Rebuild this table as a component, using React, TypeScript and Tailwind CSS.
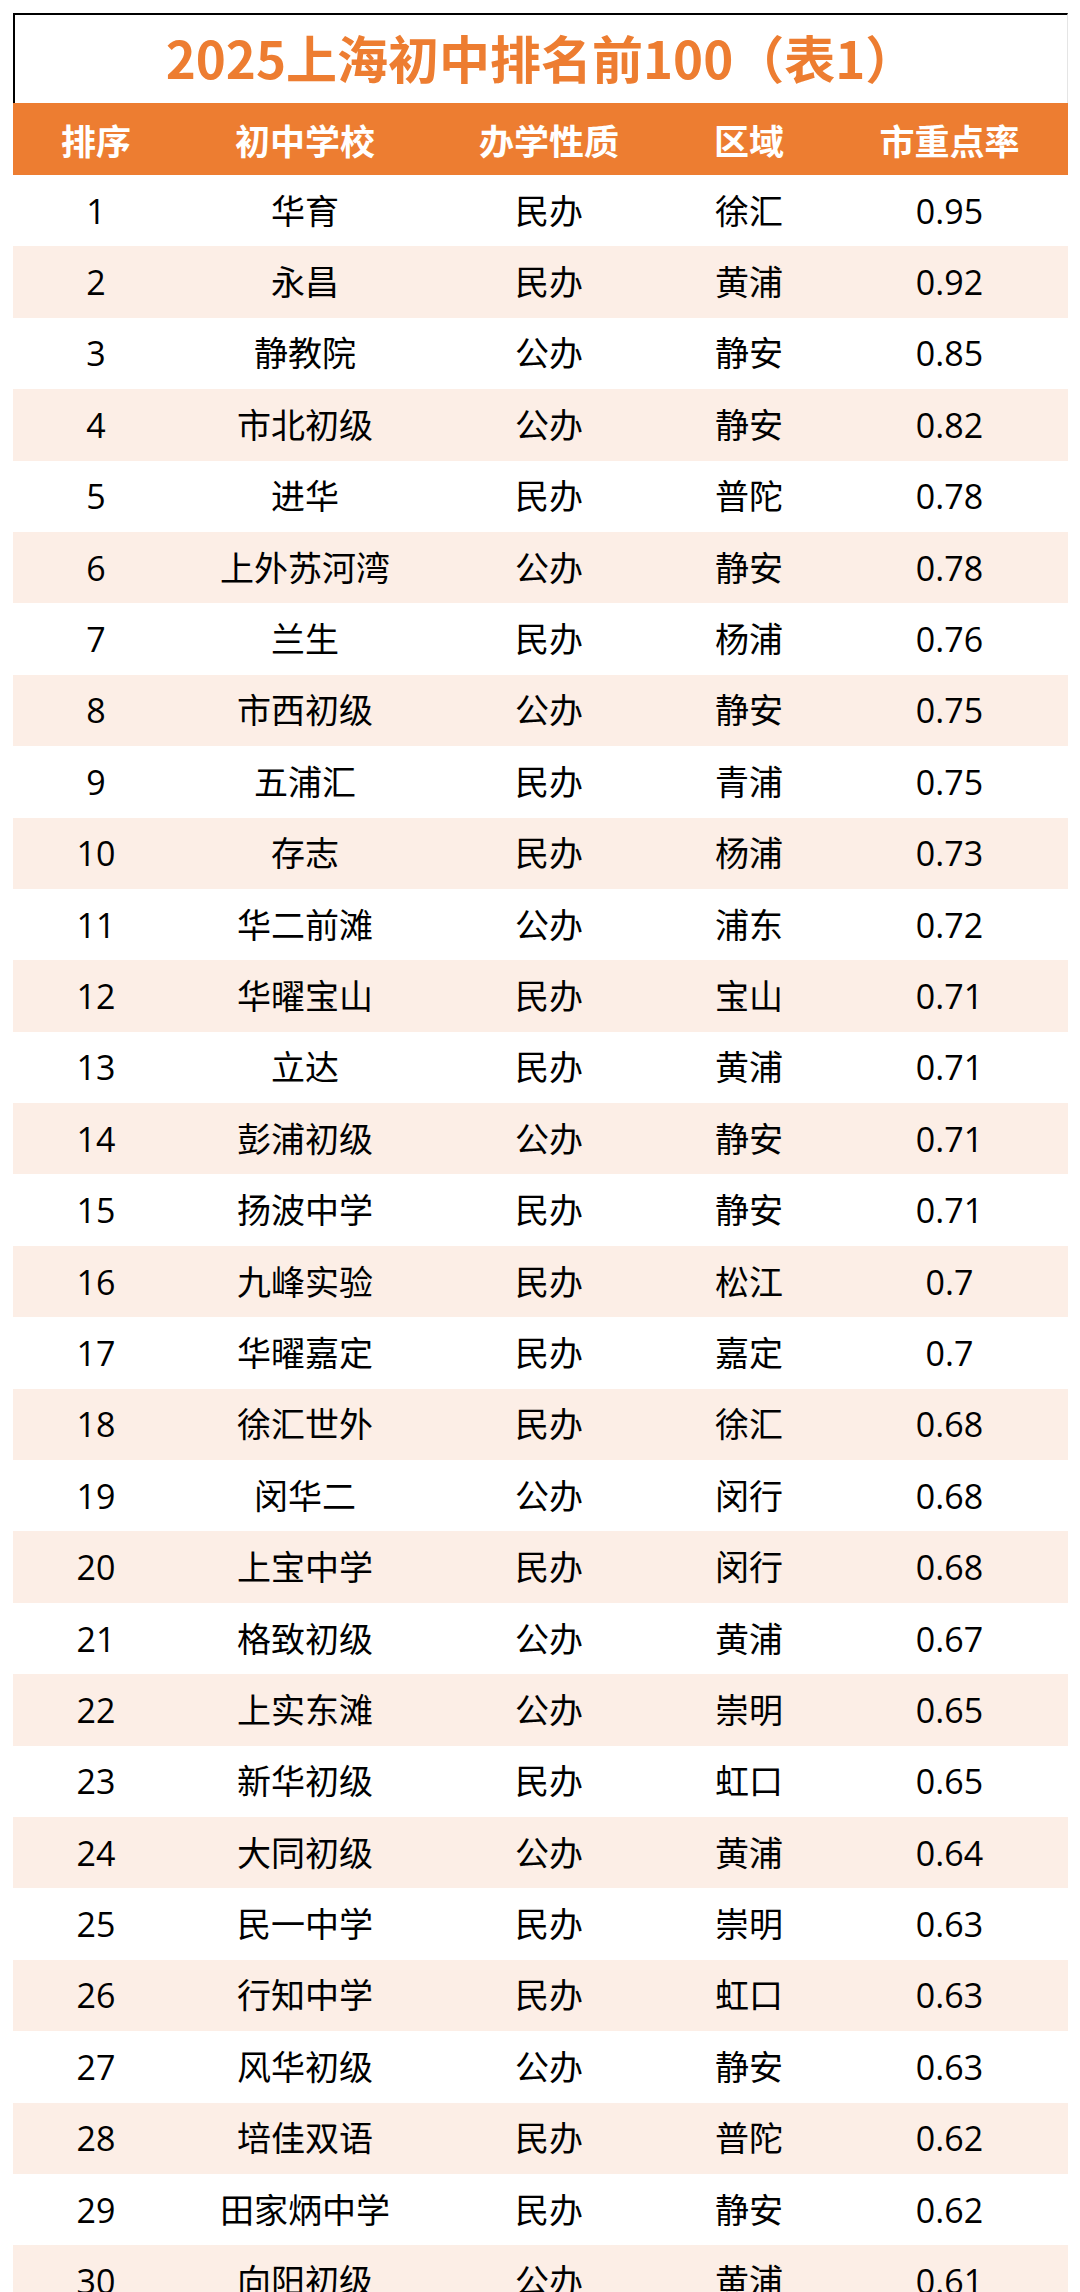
import React from "react";

const rows: [string, string, string, string, string][] = [
  ["1", "华育", "民办", "徐汇", "0.95"],
  ["2", "永昌", "民办", "黄浦", "0.92"],
  ["3", "静教院", "公办", "静安", "0.85"],
  ["4", "市北初级", "公办", "静安", "0.82"],
  ["5", "进华", "民办", "普陀", "0.78"],
  ["6", "上外苏河湾", "公办", "静安", "0.78"],
  ["7", "兰生", "民办", "杨浦", "0.76"],
  ["8", "市西初级", "公办", "静安", "0.75"],
  ["9", "五浦汇", "民办", "青浦", "0.75"],
  ["10", "存志", "民办", "杨浦", "0.73"],
  ["11", "华二前滩", "公办", "浦东", "0.72"],
  ["12", "华曜宝山", "民办", "宝山", "0.71"],
  ["13", "立达", "民办", "黄浦", "0.71"],
  ["14", "彭浦初级", "公办", "静安", "0.71"],
  ["15", "扬波中学", "民办", "静安", "0.71"],
  ["16", "九峰实验", "民办", "松江", "0.7"],
  ["17", "华曜嘉定", "民办", "嘉定", "0.7"],
  ["18", "徐汇世外", "民办", "徐汇", "0.68"],
  ["19", "闵华二", "公办", "闵行", "0.68"],
  ["20", "上宝中学", "民办", "闵行", "0.68"],
  ["21", "格致初级", "公办", "黄浦", "0.67"],
  ["22", "上实东滩", "公办", "崇明", "0.65"],
  ["23", "新华初级", "民办", "虹口", "0.65"],
  ["24", "大同初级", "公办", "黄浦", "0.64"],
  ["25", "民一中学", "民办", "崇明", "0.63"],
  ["26", "行知中学", "民办", "虹口", "0.63"],
  ["27", "风华初级", "公办", "静安", "0.63"],
  ["28", "培佳双语", "民办", "普陀", "0.62"],
  ["29", "田家炳中学", "民办", "静安", "0.62"],
  ["30", "向阳初级", "公办", "黄浦", "0.61"],
];

const headers = ["排序", "初中学校", "办学性质", "区域", "市重点率"];

export default function App() {
  return (
    <div
      className="w-[1080px] h-[2292px] overflow-hidden bg-white pt-[13px] pl-[13px]"
      style={{ fontFamily: '"Open Sans", "Noto Sans CJK SC", sans-serif' }}
    >
      <div className="w-[1055px]">
        <div
          className="h-[90px] border-t-2 border-l-2 border-r border-t-black border-l-black border-r-[#e5e5e5] flex items-center justify-center text-[#ED7D31] text-[51px] font-bold leading-none pb-[4px]"
          style={{ fontFamily: '"Noto Sans CJK SC", sans-serif' }}
        >
          2025上海初中排名前100（表1）
        </div>
        <div
          className="h-[72px] bg-[#ED7D31] grid grid-cols-[166px_252px_236px_164px_237px] items-center text-white text-[35px] font-bold leading-none"
          style={{ fontFamily: '"Noto Sans CJK SC", sans-serif' }}
        >
          {headers.map((h) => (
            <div key={h} className="text-center">
              {h}
            </div>
          ))}
        </div>
        {rows.map((r, i) => (
          <div
            key={r[0]}
            className={`h-[71.4px] grid grid-cols-[166px_252px_236px_164px_237px] items-center text-black text-[34px] leading-none ${
              i % 2 === 1 ? "bg-[#FCEEE6]" : "bg-white"
            }`}
          >
            {r.map((c, j) => (
              <div key={j} className="text-center">
                {c}
              </div>
            ))}
          </div>
        ))}
      </div>
    </div>
  );
}
